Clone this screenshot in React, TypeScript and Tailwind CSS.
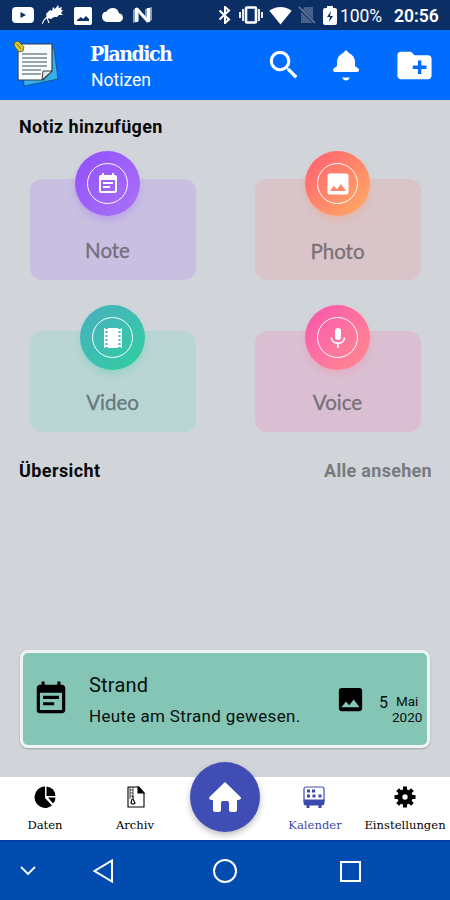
import type { ReactNode } from "react";
import {
  MdCloud,
  MdCreateNewFolder,
  MdEventNote,
  MdImage,
  MdSearch,
  MdSignalWifi4Bar,
} from "react-icons/md";

interface ActionCardProps {
  label: string;
  card: string;
  circle: string;
  text: string;
  icon: ReactNode;
}

function StatusBar() {
  return (
    <div className="flex h-[30px] shrink-0 items-center bg-[#0b2f65] text-white">
      <svg className="ml-3 h-4 w-[22px] shrink-0" viewBox="0 0 22 16">
        <rect width="22" height="16" rx="4" fill="currentColor" />
        <path d="M8.5 5v6l5.5-3z" fill="#0b2f65" />
      </svg>
      <svg className="ml-2 h-[22px] w-[23px] shrink-0" viewBox="0 0 23 22" fill="currentColor">
        <path d="M5 14 4 10l4-4 2 1 1-4 2 2 3-4 1 3 3-1-1 3 2 0-2 3 2 2-4 0-2 2-3 0-3 2-4-1z" />
        <path d="M6 12 2 16 0 20M5 14l2 5" fill="none" stroke="currentColor" strokeWidth="1.1" />
      </svg>
      <svg className="ml-[9px] mt-0.5 h-[18px] w-[18px] shrink-0" viewBox="0 0 18 18">
        <rect width="18" height="18" rx="2" fill="currentColor" />
        <path d="M3 14h12v-2l-3-3-3 3-2-2-4 3z" fill="#0b2f65" />
      </svg>
      <MdCloud className="ml-[10px] h-[22px] w-[21px] shrink-0" />
      <svg className="ml-[10px] h-4 w-[19px] shrink-0" viewBox="0 0 19 16">
        <path d="M0 16V3l4-3 8 9V2l7-2v13l-5 3-8-9v7z" fill="currentColor" opacity=".55" />
        <path d="M2 15V1h3l9 10V1h3v14h-3L5 5v10z" fill="currentColor" />
      </svg>
      <svg className="ml-[66px] h-[18px] w-[14px] shrink-0" viewBox="0 0 14 18" fill="none" stroke="currentColor">
        <path d="m1.500 4.500 9.500 9-4 3.500V1l4 3.500-9.500 9" strokeWidth="2" />
      </svg>
      <svg className="ml-[7px] h-[18px] w-[24px] shrink-0" viewBox="0 0 24 18" fill="none" stroke="currentColor">
        <rect x="7" y="1.5" width="10" height="15" rx="1" strokeWidth="2.6" />
        <path d="M4 3v12M20 3v12M1 6v6M23 6v6" strokeWidth="1.8" />
      </svg>
      <MdSignalWifi4Bar className="ml-[6px] h-[23px] w-[23px] shrink-0" />
      <svg className="ml-[6px] h-[18px] w-[18px] shrink-0" viewBox="0 0 18 18">
        <path d="M7 1h8v16H3V5z" fill="#48618a" />
        <path d="m0 1 17 16" stroke="#0b2f65" strokeWidth="3" />
        <path d="m1 1 16 16" stroke="#6d819f" strokeWidth="1.5" />
      </svg>
      <svg className="ml-[7px] h-[19px] w-[14px] shrink-0" viewBox="0 0 14 19">
        <path d="M4 0h6v2h2q2 0 2 2v13q0 2-2 2H2q-2 0-2-2V4q0-2 2-2h2z" fill="currentColor" />
        <path d="M8 5 4 11h3l-1 5 4-6H7z" fill="#0b2f65" />
      </svg>
      <span className="ml-[3px] mt-0.5 w-[42px] text-[17.5px] tracking-[-0.1px]">100%</span>
      <span className="ml-[12px] mt-0.5 text-[17.5px] font-semibold">20:56</span>
    </div>
  );
}

function NotesLogo() {
  return (
    <svg className="h-12 w-12 shrink-0" viewBox="0 0 48 48">
      <path d="m9 12 32-5 4 31-34 7z" fill="#36aee9" stroke="#174c70" strokeWidth=".8" />
      <path d="M5 3h34v27l-9 9H5z" fill="#f7fcfc" stroke="#354047" strokeWidth="1.2" />
      <path
        d="M9 13h25M9 17h25M9 21h25M9 25h25M9 29h19M9 33h19"
        stroke="#7d858a"
        strokeWidth="1.3"
      />
      <path d="m30 30 9 0-10 9z" fill="#dbeae9" stroke="#242424" strokeWidth=".9" />
      <path d="m1 2 4-2 6 6-1 4-4 1-4-5z" fill="#dfc62c" stroke="#5b5b24" strokeWidth=".8" />
      <path d="m4 3 4 5" stroke="#786d20" />
    </svg>
  );
}

function Header() {
  return (
    <header className="flex h-[70px] shrink-0 bg-[#006dff] text-white">
      <div className="ml-[13px] mt-[11px] w-[77px] shrink-0">
        <NotesLogo />
      </div>
      <div className="w-[179px]">
        <h1 className="mt-[9px] h-[30px] whitespace-nowrap font-['DejaVu_Serif_Condensed','DejaVu_Serif',serif] text-[21px] font-bold leading-[30px] tracking-[-1.45px]">
          Plandich
        </h1>
        <p className="ml-px text-[17.5px] leading-[22px]">Notizen</p>
      </div>
      <MdSearch className="-ml-[4px] mt-[16px] h-[38px] w-[38px] shrink-0" />
      <svg className="ml-[30px] mt-5 h-8 w-[26px] shrink-0" viewBox="0 0 26 32" fill="currentColor">
        <path d="M13 0l3 3c4 2 6 5 6 9v4l4 3v1q0 2-2 2H2q-2 0-2-2v-1l4-3v-4c0-4 2-7 6-9zM9 27.5h8q-1.500 3-4 3t-4-3" />
      </svg>
      <MdCreateNewFolder className="ml-[35px] mt-[15px] h-[41px] w-[41px] shrink-0" />
    </header>
  );
}

function ActionCard({ label, card, circle, text, icon }: ActionCardProps) {
  return (
    <div className={`flex h-[101px] w-[166px] flex-col items-center rounded-[12px] ${card}`}>
      <div
        className={`flex h-[65px] w-[65px] shrink-0 items-center justify-center rounded-full bg-gradient-to-br ${circle}`}
      >
        <div className="flex h-[41px] w-[41px] items-center justify-center rounded-full border-[1.5px] border-white text-white">
          {icon}
        </div>
      </div>
      <span className={`font-[Lato,sans-serif] text-[20.5px] leading-[28px] [-webkit-text-stroke:0.3px_currentColor] ${text}`}>
        {label}
      </span>
    </div>
  );
}

function Overview() {
  return (
    <article className="mx-5 flex h-[98px] rounded-[8px] border-[3px] border-[#eef3f4] bg-[#84c5b5] text-[#07100e] shadow-[0_1px_2px_#9aa2a5]">
      <MdEventNote className="ml-[9px] mt-[27px] h-[38px] w-[38px] shrink-0 text-black" />
      <div className="ml-[19px] w-[243px] shrink-0">
        <h3 className="mt-[20px] text-[20px] leading-[24px] tracking-[0.2px]">Strand</h3>
        <p className="mt-[8px] whitespace-nowrap text-[17px] leading-[22px] tracking-[0.35px]">
          Heute am Strand gewesen.
        </p>
      </div>
      <MdImage className="mt-[31px] ml-[3px] h-[31px] w-[31px] shrink-0 text-black" />
      <span className="ml-[13px] mt-[40px] text-[16px] leading-[20px]">5</span>
      <div className="ml-[4px] mt-[41px] text-center text-[13.5px] leading-[15.5px]">
        <div>Mai</div>
        <div>2020</div>
      </div>
    </article>
  );
}

function NavItem({ label, icon, active = false }: { label: string; icon: ReactNode; active?: boolean }) {
  return (
    <div
      className={`flex w-[90px] shrink-0 flex-col items-center pt-[8px] font-['DejaVu_Serif',serif] text-[11.6px] ${active ? "text-[#3c4aae]" : "text-black"}`}
    >
      {icon}
      <span className="mt-[7px] leading-[18px]">{label}</span>
    </div>
  );
}

function BottomNav() {
  return (
    <nav className="flex h-[63px] shrink-0 bg-white">
      <NavItem
        label="Daten"
        icon={
          <svg className="h-6 w-6" viewBox="0 0 24 24" fill="currentColor">
            <path d="M12 1.500v11.500l7 7.500A10.700 10.700 0 1 1 12 1.500m1.500 0q8.500 1 9 9.500h-9zm1.500 11h7.500q0 4-2.500 6z" />
          </svg>
        }
      />
      <NavItem
        label="Archiv"
        icon={
          <svg className="ml-0.5 h-6 w-6" viewBox="0 0 24 24" fill="none" stroke="currentColor" strokeWidth="1.1">
            <path d="M4 2h11l5 6v14H4z" />
            <path d="M14 2v6h6z" fill="currentColor" />
            <path d="M6 2v12M9 2v10M6 5h3M6 8h3M6 11h3" strokeWidth=".7" />
            <path d="M9 11v3l2 4q-2 2-4 0l1-4" />
          </svg>
        }
      />
      <div className="flex w-[90px] shrink-0 justify-center">
        <div className="-mt-[15px] flex h-[70px] w-[70px] shrink-0 items-center justify-center rounded-full bg-[#3f4db4] text-white shadow-[0_3px_6px_#0004]">
          <svg className="h-[34px] w-[34px]" viewBox="0 0 34 34" fill="currentColor">
            <path d="M17 2 33 17.500q0 2-3 2.500h-1V30q0 2-2 2h-4q-2 0-2-2v-7q0-2-2-2h-4q-2 0-2 2v7q0 2-2 2H7q-2 0-2-2V20H4q-3 0-3-2.500z" />
          </svg>
        </div>
      </div>
      <NavItem
        active
        label="Kalender"
        icon={
          <svg className="-ml-0.5 h-6 w-6" viewBox="0 0 24 24" fill="currentColor">
            <rect x="2" y="2" width="20" height="15" rx="2" fill="none" stroke="currentColor" strokeWidth="1.2" />
            <path d="M5 4.500h3v3H5zm5 0h3v3h-3zM5 9.500h3v3H5zm5.500 0h3v3h-3zm6 0h3v3h-3zM1.500 14.500h21V18q0 2.500-3 2.500V23h-3v-2.500h-9V23h-3v-2.500q-3 0-3-2.500z" />
          </svg>
        }
      />
      <NavItem
        label="Einstellungen"
        icon={
          <svg className="h-6 w-6" viewBox="0 0 24 24" fill="none" stroke="currentColor">
            <circle cx="12" cy="12" r="5.200" strokeWidth="5" />
            <path
              d="M12 1.500v4m0 13v4M1.500 12h4m13 0h4M4.600 4.600l2.800 2.800m9.200 9.200 2.800 2.800m0-14.800-2.800 2.800m-9.200 9.200-2.800 2.800"
              strokeWidth="4"
            />
          </svg>
        }
      />
    </nav>
  );
}

function SystemBar() {
  return (
    <footer className="flex h-[60px] shrink-0 items-center border-t-2 border-[#033d9f] bg-[#014cae] text-white">
      <svg className="ml-[19px] h-[14px] w-[18px]" viewBox="0 0 18 14" fill="none" stroke="currentColor">
        <path d="m2 3 7 7 7-7" strokeWidth="1.800" />
      </svg>
      <svg className="ml-[55px] h-6 w-[23px]" viewBox="0 0 23 24" fill="none" stroke="currentColor">
        <path d="M20 1.500v21L2.500 12z" strokeWidth="2" />
      </svg>
      <div className="ml-[98px] h-6 w-6 rounded-full border-2 border-white" />
      <div className="ml-[103px] h-[21px] w-[21px] border-2 border-white" />
    </footer>
  );
}

export default function App() {
  return (
    <div className="flex h-[900px] w-[450px] flex-col bg-[#d1d5da] font-[Roboto,sans-serif]">
      <StatusBar />
      <Header />

      <main className="flex h-[677px] shrink-0 flex-col">
        <h2 className="ml-[19px] mt-[15px] text-[18px] font-bold leading-6 tracking-[0.35px] text-[#07090b]">
          Notiz hinzufügen
        </h2>
        <div className="ml-[30px] mt-10 grid grid-cols-[166px_166px] gap-x-[59px] gap-y-[51px]">
          <ActionCard
            label="Note"
            card="bg-[#c8bfe1] pr-[11px]"
            circle="-mt-[28px] from-[#914dfc] to-[#aa72f6] shadow-[0_4px_6px_#a66cf550]"
            text="mt-[20px] text-[#746f7d]"
            icon={<MdEventNote className="h-[24px] w-[24px]" />}
          />
          <ActionCard
            label="Photo"
            card="bg-[#d9c4c9] pr-px"
            circle="-mt-[28px] from-[#ff596f] to-[#ffad61] shadow-[0_4px_6px_#ff986650]"
            text="mt-[21px] text-[#7a7175]"
            icon={<MdImage className="h-[28px] w-[28px]" />}
          />
          <ActionCard
            label="Video"
            card="bg-[#b9d5d4] pr-px"
            circle="-mt-[26px] from-[#48afc0] to-[#2dce9f] shadow-[0_4px_6px_#2dce9f40]"
            text="mt-[18px] text-[#68787b]"
            icon={
              <svg className="h-5 w-[18px]" viewBox="0 0 18 20" fill="currentColor">
                <path
                  fillRule="evenodd"
                  d="M0 0h1v1h3V0h10v1h3V0h1v20h-1v-1h-3v1H4v-1H1v1H0zM1.500 3v2h2V3zm0 4v2h2V7zm0 4v2h2v-2zm0 4v2h2v-2zM14.500 3v2h2V3zm0 4v2h2V7zm0 4v2h2v-2zm0 4v2h2v-2z"
                />
              </svg>
            }
          />
          <ActionCard
            label="Voice"
            card="bg-[#dabfd2] pr-px"
            circle="-mt-[26px] from-[#fa51ae] to-[#ff8b8c] shadow-[0_4px_6px_#ff759840]"
            text="mt-[18px] text-[#777078]"
            icon={
              <svg className="h-[22px] w-4" viewBox="0 0 16 22" fill="none" stroke="currentColor">
                <rect x="5" y="1" width="6" height="12" rx="3" fill="currentColor" stroke="none" />
                <path d="M1.500 10.500c0 7.500 13 7.500 13 0M8 16v5" strokeWidth="1.700" />
              </svg>
            }
          />
        </div>
        <div className="ml-[19px] mr-[18px] mt-[27px] flex justify-between text-[18px] font-bold leading-6">
          <h2 className="tracking-[0.4px] text-[#07090b]">Übersicht</h2>
          <a className="tracking-[0.3px] text-[#777b80]">Alle ansehen</a>
        </div>
        <div className="mt-[167px]">
          <Overview />
        </div>
      </main>

      <BottomNav />
      <SystemBar />
    </div>
  );
}
